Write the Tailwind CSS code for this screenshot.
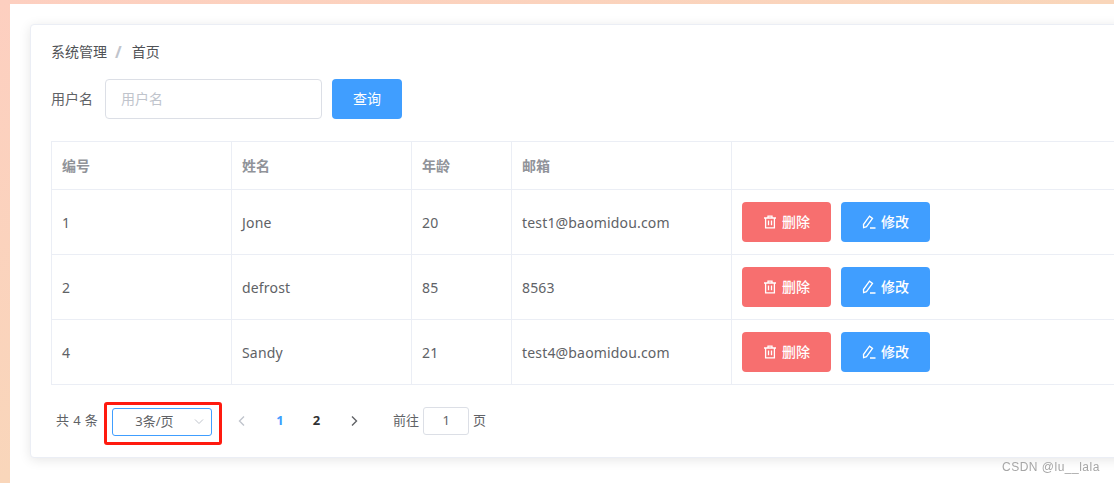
<!DOCTYPE html>
<html lang="en">
<head>
    <meta charset="UTF-8">
    <title>系统管理</title>
    <script src="https://cdn.jsdelivr.net/npm/@tailwindcss/browser@4"></script>
</head>
<body class="w-[1114px] h-[483px] overflow-hidden bg-[#fbd3c1] font-['Noto_Sans','Noto_Sans_CJK_SC',sans-serif] text-[14px] text-[#606266]">
    <div class="h-[483px] pt-[4px] pl-[10px] bg-gradient-to-br from-[#fdcfc0] via-[#f9d6ba] to-[#f9d6ba]">
        <div class="h-[479px] w-[1104px] overflow-hidden bg-white pt-[20px] pl-[20px] pb-[20px]">
            <!-- Card -->
            <div class="w-[1200px] h-[434px] rounded-[4px] border border-[#ebeef5] bg-white p-[20px] shadow-[0_2px_12px_0_rgba(0,0,0,0.1)]">
                <!-- Breadcrumb -->
                <div class="flex items-center h-[14px] leading-[14px] text-[#505256]">
                    <span>系统管理</span>
                    <span class="ml-[8px] mr-[10px] text-[16px] font-bold text-[#c0c4cc]">/</span>
                    <span>首页</span>
                </div>

                <!-- Search form -->
                <div class="flex items-center mt-[20px] h-[40px]">
                    <label class="mr-[12px] pb-[2px]">用户名</label>
                    <input type="text" placeholder="用户名" class="w-[217px] h-[40px] px-[15px] pb-[2px] rounded-[4px] border border-[#dcdfe6] bg-white outline-none placeholder:text-[#c0c4cc]">
                    <button class="ml-[10px] w-[70px] h-[40px] pb-[2px] rounded-[4px] bg-[#409eff] text-white">查询</button>
                </div>

                <!-- Table -->
                <table class="mt-[22px] table-fixed w-[1149px] border-collapse border-t border-l border-[#ebeef5]">
                    <colgroup>
                        <col class="w-[180px]">
                        <col class="w-[180px]">
                        <col class="w-[100px]">
                        <col class="w-[220px]">
                        <col>
                    </colgroup>
                    <thead>
                        <tr class="h-[48px] text-left text-[#909399]">
                            <th class="border-r border-b border-[#ebeef5] px-[10px] font-bold">编号</th>
                            <th class="border-r border-b border-[#ebeef5] px-[10px] font-bold">姓名</th>
                            <th class="border-r border-b border-[#ebeef5] px-[10px] font-bold">年龄</th>
                            <th class="border-r border-b border-[#ebeef5] px-[10px] font-bold">邮箱</th>
                            <th class="border-b border-[#ebeef5]"></th>
                        </tr>
                    </thead>
                    <tbody class="tracking-[0.17px]">
                        <tr class="h-[65px]">
                            <td class="border-r border-b border-[#ebeef5] px-[10px]">1</td>
                            <td class="border-r border-b border-[#ebeef5] px-[10px]">Jone</td>
                            <td class="border-r border-b border-[#ebeef5] px-[10px]">20</td>
                            <td class="border-r border-b border-[#ebeef5] px-[10px]">test1@baomidou.com</td>
                            <td class="border-b border-[#ebeef5] px-[10px]">
                                <div class="flex gap-[10px] tracking-normal">
                                    <button class="flex items-center justify-center gap-[5px] w-[89px] h-[40px] pb-[2px] rounded-[4px] bg-[#f76f6f] text-white font-medium">
                                        <svg class="mt-[2px] w-[14px] h-[14px]" viewBox="0 0 14 14" fill="none" stroke="currentColor" stroke-width="1.3"><path d="M1 3h12M5 3V1.2h4V3M2.6 3v9.8h8.8V3M5.5 5.5v4.8M8.5 5.5v4.8"/></svg>
                                        删除
                                    </button>
                                    <button class="flex items-center justify-center gap-[5px] w-[89px] h-[40px] pb-[2px] rounded-[4px] bg-[#409eff] text-white font-medium">
                                        <svg class="mt-[2px] w-[14px] h-[14px]" viewBox="0 0 14 14" fill="none" stroke="currentColor" stroke-width="1.3"><path d="M1.5 9.5 7.5 1.2l3 2.2-6 8.3-2.9.9zM8 13h5.5"/></svg>
                                        修改
                                    </button>
                                </div>
                            </td>
                        </tr>
                        <tr class="h-[65px]">
                            <td class="border-r border-b border-[#ebeef5] px-[10px]">2</td>
                            <td class="border-r border-b border-[#ebeef5] px-[10px]">defrost</td>
                            <td class="border-r border-b border-[#ebeef5] px-[10px]">85</td>
                            <td class="border-r border-b border-[#ebeef5] px-[10px]">8563</td>
                            <td class="border-b border-[#ebeef5] px-[10px]">
                                <div class="flex gap-[10px] tracking-normal">
                                    <button class="flex items-center justify-center gap-[5px] w-[89px] h-[40px] pb-[2px] rounded-[4px] bg-[#f76f6f] text-white font-medium">
                                        <svg class="mt-[2px] w-[14px] h-[14px]" viewBox="0 0 14 14" fill="none" stroke="currentColor" stroke-width="1.3"><path d="M1 3h12M5 3V1.2h4V3M2.6 3v9.8h8.8V3M5.5 5.5v4.8M8.5 5.5v4.8"/></svg>
                                        删除
                                    </button>
                                    <button class="flex items-center justify-center gap-[5px] w-[89px] h-[40px] pb-[2px] rounded-[4px] bg-[#409eff] text-white font-medium">
                                        <svg class="mt-[2px] w-[14px] h-[14px]" viewBox="0 0 14 14" fill="none" stroke="currentColor" stroke-width="1.3"><path d="M1.5 9.5 7.5 1.2l3 2.2-6 8.3-2.9.9zM8 13h5.5"/></svg>
                                        修改
                                    </button>
                                </div>
                            </td>
                        </tr>
                        <tr class="h-[65px]">
                            <td class="border-r border-b border-[#ebeef5] px-[10px]">4</td>
                            <td class="border-r border-b border-[#ebeef5] px-[10px]">Sandy</td>
                            <td class="border-r border-b border-[#ebeef5] px-[10px]">21</td>
                            <td class="border-r border-b border-[#ebeef5] px-[10px]">test4@baomidou.com</td>
                            <td class="border-b border-[#ebeef5] px-[10px]">
                                <div class="flex gap-[10px] tracking-normal">
                                    <button class="flex items-center justify-center gap-[5px] w-[89px] h-[40px] pb-[2px] rounded-[4px] bg-[#f76f6f] text-white font-medium">
                                        <svg class="mt-[2px] w-[14px] h-[14px]" viewBox="0 0 14 14" fill="none" stroke="currentColor" stroke-width="1.3"><path d="M1 3h12M5 3V1.2h4V3M2.6 3v9.8h8.8V3M5.5 5.5v4.8M8.5 5.5v4.8"/></svg>
                                        删除
                                    </button>
                                    <button class="flex items-center justify-center gap-[5px] w-[89px] h-[40px] pb-[2px] rounded-[4px] bg-[#409eff] text-white font-medium">
                                        <svg class="mt-[2px] w-[14px] h-[14px]" viewBox="0 0 14 14" fill="none" stroke="currentColor" stroke-width="1.3"><path d="M1.5 9.5 7.5 1.2l3 2.2-6 8.3-2.9.9zM8 13h5.5"/></svg>
                                        修改
                                    </button>
                                </div>
                            </td>
                        </tr>
                    </tbody>
                </table>

                <!-- Pagination -->
                <div class="flex items-center h-[28px] mt-[22px] pl-[5px] text-[13px] text-[#606266]">
                    <span class="tracking-[0.4px]">共 4 条</span>
                    <!-- red highlight box -->
                    <div class="relative ml-[14px] self-start mt-[1px] flex items-center w-[100px] h-[28px] rounded-[3px] border border-[#409eff] text-[#606266]">
                        <span class="absolute -left-[9px] -right-[11px] -top-[7px] -bottom-[10px] rounded-[3px] border-[3px] border-[#ff1a0f]"></span>
                        <span class="w-full pl-[22px]">3条/页</span>
                        <svg class="absolute right-[6px] top-[9px] w-[12px] h-[8px]" viewBox="0 0 12 8" fill="none" stroke="#c0c4cc" stroke-width="1"><path d="M2 1.5 6 5.5l4-4"/></svg>
                    </div>
                    <svg class="ml-[25px] w-[10px] h-[12px]" viewBox="0 0 10 12" fill="none" stroke="#c0c4cc" stroke-width="1.4"><path d="M7 1.5 2.5 6 7 10.5"/></svg>
                    <span class="ml-[29px] font-bold text-[#409eff]">1</span>
                    <span class="ml-[29px] font-bold text-[#303133]">2</span>
                    <svg class="ml-[29px] w-[10px] h-[12px]" viewBox="0 0 10 12" fill="none" stroke="#606266" stroke-width="1.4"><path d="M3 1.5 7.5 6 3 10.5"/></svg>
                    <span class="ml-[34px]">前往</span>
                    <div class="ml-[4px] w-[46px] h-[28px] flex items-center justify-center rounded-[3px] border border-[#dcdfe6]">1</div>
                    <span class="ml-[4px]">页</span>
                </div>
            </div>
        </div>
    </div>
    <!-- Watermark -->
    <div class="fixed left-[1002px] top-[460px] font-['Liberation_Sans',sans-serif] text-[12px] leading-[14px] tracking-[0.5px] text-[#a6a6a6]">CSDN @lu__lala</div>
</body>
</html>
